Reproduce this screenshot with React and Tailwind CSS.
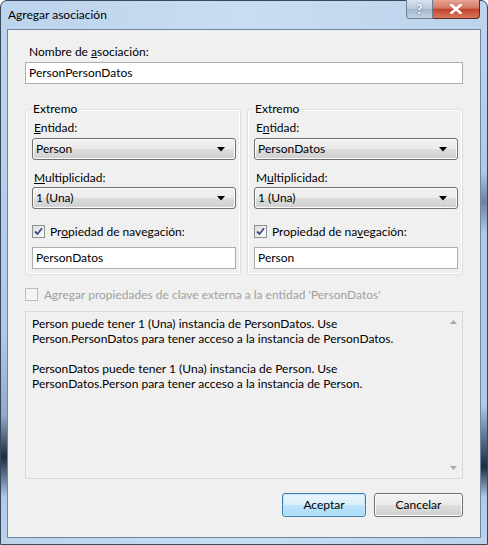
import React from 'react'

const FONT = { fontFamily: 'Lato, "Open Sans", sans-serif' }

// ── small pieces ───────────────────────────────────────────────────
function Combo({ value }) {
  return (
    <div className="h-[22px] flex items-center justify-between pl-[3px] pr-[10px] rounded-[3px] border border-[#707070] bg-[linear-gradient(to_bottom,#f2f2f2_0%,#ebebeb_48%,#dddddd_52%,#cfcfcf_100%)] shadow-[inset_0_0_0_1px_#fcfcfc]">
      <span className="text-black">{value}</span>
      <svg width="8" height="5" viewBox="0 0 8 5"><path d="M0 0H8L4 4.5Z" fill="#000" /></svg>
    </div>
  )
}

function TextBox({ value }) {
  return (
    <div className="h-[22px] flex items-center pl-[3px] border border-[#abadb3] bg-white text-black">
      {value}
    </div>
  )
}

function CheckBox({ checked, disabled }) {
  return (
    <div className={`w-[13px] h-[13px] border flex items-center justify-center ${disabled ? 'border-[#bcbcbc] bg-[#f4f4f4]' : 'border-[#8e8f8f] bg-[linear-gradient(135deg,#dcdcdc,#ffffff)]'}`}>
      {checked && (
        <svg width="9" height="9" viewBox="0 0 9 9">
          <path d="M1 4.5L3.5 7L8 1.2" stroke="#3a4d87" strokeWidth="1.8" fill="none" />
        </svg>
      )}
    </div>
  )
}

function Extremo({ entity, entityKey, multKey, navLabel, nav }) {
  return (
    <div className="relative w-[216px] h-[166px] rounded-[3px] border border-[#d5dfe5] shadow-[inset_0_0_0_1px_#ffffff] pl-[6px] pr-[4px] pt-[10px]">
      <span className="absolute left-[5px] top-[-9px] px-[2px] bg-[#f0f0f0] leading-[15px]">Extremo</span>
      <div className="leading-[15px] pl-[2px]">{entityKey}</div>
      <div className="mt-[3px]"><Combo value={entity} /></div>
      <div className="leading-[15px] mt-[10px] pl-[2px]">{multKey}</div>
      <div className="mt-[2px]"><Combo value="1 (Una)" /></div>
      <div className="mt-[14px] h-[17px] flex items-center gap-[5px]">
        <CheckBox checked />
        <span>{navLabel}</span>
      </div>
      <div className="mt-[7px]"><TextBox value={nav} /></div>
    </div>
  )
}

function DialogButton({ children, isDefault, width }) {
  return (
    <div
      className={`h-[24px] flex items-center justify-center rounded-[3px] border ${width} ${
        isDefault
          ? 'border-[#3c7fb1] bg-[linear-gradient(to_bottom,#eaf6fd_0%,#d9f0fc_48%,#bee6fd_52%,#a7d9f5_100%)] shadow-[inset_0_0_0_1px_#c0e7f9]'
          : 'border-[#707070] bg-[linear-gradient(to_bottom,#f2f2f2_0%,#ebebeb_48%,#dddddd_52%,#cfcfcf_100%)] shadow-[inset_0_0_0_1px_#fcfcfc]'
      }`}
    >
      {children}
    </div>
  )
}

// ── Main dialog ────────────────────────────────────────────────────
export default function App() {
  return (
    <div className="w-[488px] h-[545px] overflow-hidden bg-white" style={FONT}>
      <div className="w-[488px] h-[545px] flex flex-col rounded-t-[7px] border border-[#39495c] bg-[linear-gradient(to_right,#bcd3ec,#c9ddf2_50%,#bcd3ec)] text-[12px] text-black">
        {/* Title bar */}
        <div className="h-[28px] flex items-start justify-between pl-[7px] pr-[7px]">
          <span className="mt-[6px] leading-[15px] text-black">Agregar asociación</span>
          <div className="flex h-[19px] -mt-px">
            <div className="w-[27px] h-[19px] flex items-center justify-center rounded-bl-[4px] border border-[#6d7f95] border-t-0 bg-[linear-gradient(to_bottom,#d7e3f0,#b6c8dc_50%,#a3b6cc_52%,#c3d3e4)]">
              <span className="text-[13px] font-bold text-white leading-none [text-shadow:0_0_2px_#44546a]">?</span>
            </div>
            <div className="w-[47px] h-[19px] flex items-center justify-center rounded-br-[4px] border border-l-0 border-[#5b2a22] border-t-0 bg-[linear-gradient(to_bottom,#e8a493,#d47865_45%,#c2442c_52%,#d8775a)]">
              <svg width="12" height="10" viewBox="0 0 12 10">
                <path d="M1.5 1L10.5 9M10.5 1L1.5 9" stroke="#ffffff" strokeWidth="2.6" strokeLinecap="square" />
              </svg>
            </div>
          </div>
        </div>

        {/* Body: frame strips + client */}
        <div className="flex-1 flex">
          <div className="w-[6px] bg-[linear-gradient(to_bottom,#bcd4ee_0%,#aecae8_60%,#8fa9c6_76%,#1e2c3e_84%,#5f7894_88%,#aecae8_92%,#b9d2ed_100%)]" />
          <div className="flex-1 flex flex-col border border-[#6e859f] bg-[#f0f0f0] pl-[17px] pr-[17px]">
            <div className="mt-[14px] leading-[15px] pl-[4px]">Nombre de <span className="underline">a</span>sociación:</div>
            <div className="mt-[3px]"><TextBox value="PersonPersonDatos" /></div>

            <div className="mt-[25px] flex gap-[6px]">
              <Extremo
                entity="Person"
                entityKey={<><span className="underline">E</span>ntidad:</>}
                multKey={<><span className="underline">M</span>ultiplicidad:</>}
                navLabel={<>Pr<span className="underline">o</span>piedad de navegación:</>}
                nav="PersonDatos"
              />
              <Extremo
                entity="PersonDatos"
                entityKey={<>E<span className="underline">n</span>tidad:</>}
                multKey={<>M<span className="underline">u</span>ltiplicidad:</>}
                navLabel={<>Propiedad de na<span className="underline">v</span>egación:</>}
                nav="Person"
              />
            </div>

            <div className="mt-[11px] h-[17px] flex items-center gap-[6px] text-[#a0a0a0]">
              <CheckBox disabled />
              <span>Agregar propiedades de clave externa a la entidad 'PersonDatos'</span>
            </div>

            <div className="mt-[8px] h-[168px] flex border border-[#d9d9d9] bg-[#f0f0f0]">
              <div className="flex-1 pl-[6px] pt-[4px] leading-[15px]">
                <div>Person puede tener 1 (Una) instancia de PersonDatos. Use</div>
                <div>Person.PersonDatos para tener acceso a la instancia de PersonDatos.</div>
                <div className="h-[15px]" />
                <div>PersonDatos puede tener 1 (Una) instancia de Person. Use</div>
                <div>PersonDatos.Person para tener acceso a la instancia de Person.</div>
              </div>
              <div className="w-[17px] flex flex-col items-center justify-between py-[8px]">
                <svg width="7" height="4" viewBox="0 0 7 4"><path d="M0 4H7L3.5 0Z" fill="#a9a9a9" /></svg>
                <svg width="7" height="4" viewBox="0 0 7 4"><path d="M0 0H7L3.5 4Z" fill="#a9a9a9" /></svg>
              </div>
            </div>

            <div className="mt-[14px] flex justify-end gap-[8px]">
              <DialogButton isDefault width="w-[84px]">Aceptar</DialogButton>
              <DialogButton width="w-[89px]">Cancelar</DialogButton>
            </div>
          </div>
          <div className="w-[6px] bg-[linear-gradient(to_bottom,#bcd4ee_0%,#aecae8_28%,#6d849e_34%,#aecae8_40%,#aecae8_74%,#5f7894_80%,#1e2c3e_86%,#aecae8_92%,#b9d2ed_100%)]" />
        </div>
        <div className="h-[6px]" />
      </div>
    </div>
  )
}
